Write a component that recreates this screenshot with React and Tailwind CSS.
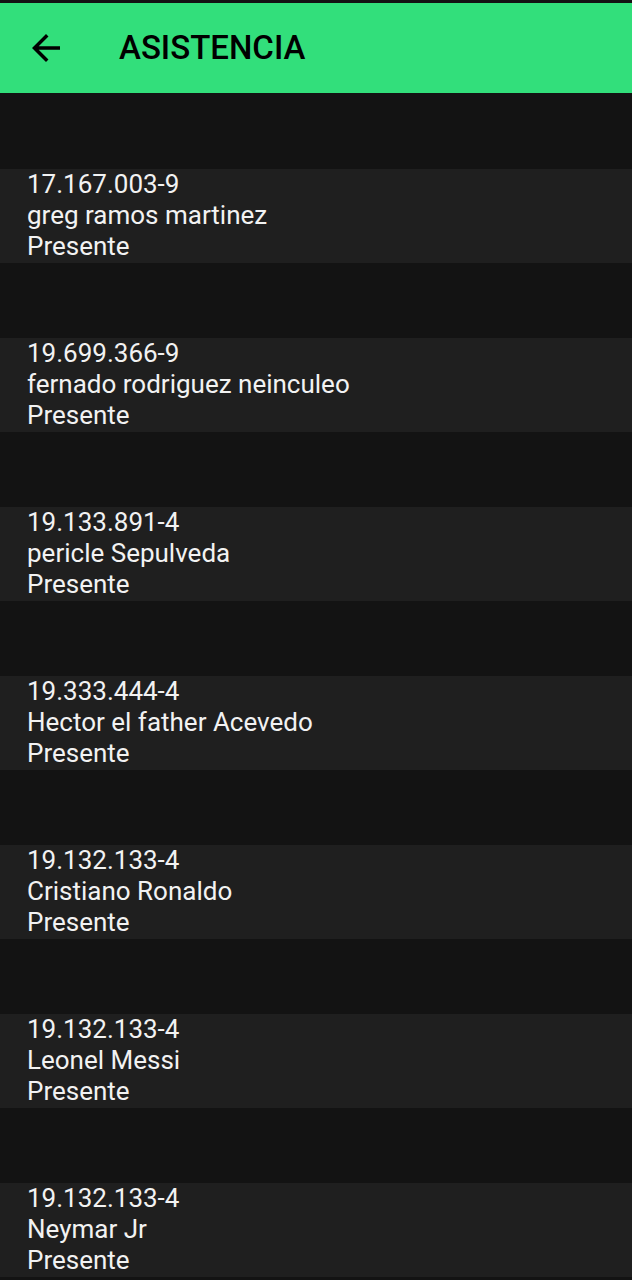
import React from "react";

const alumnos = [
  { rut: "17.167.003-9", nombre: "greg ramos martinez", estado: "Presente" },
  { rut: "19.699.366-9", nombre: "fernado rodriguez neinculeo", estado: "Presente" },
  { rut: "19.133.891-4", nombre: "pericle Sepulveda", estado: "Presente" },
  { rut: "19.333.444-4", nombre: "Hector el father Acevedo", estado: "Presente" },
  { rut: "19.132.133-4", nombre: "Cristiano Ronaldo", estado: "Presente" },
  { rut: "19.132.133-4", nombre: "Leonel Messi", estado: "Presente" },
  { rut: "19.132.133-4", nombre: "Neymar Jr", estado: "Presente" },
];

const ArrowBack = () => (
  <svg width="42" height="42" viewBox="0 0 24 24" fill="#000">
    <path d="M20 11H7.83l5.59-5.59L12 4l-8 8 8 8 1.41-1.41L7.83 13H20v-2z" />
  </svg>
);

export default function App() {
  return (
    <div className="w-[632px] h-[1280px] overflow-hidden bg-[#131313] pt-[3px] font-['Roboto',sans-serif]">
      {/* header */}
      <div className="h-[90px] bg-[#32df7b] flex items-center">
        <div className="ml-[25px] w-[42px] h-[42px]">
          <ArrowBack />
        </div>
        <h1 className="ml-[52px] text-[33px] font-medium text-black">ASISTENCIA</h1>
      </div>

      {/* lista */}
      <div className="flex flex-col pt-px gap-[75px] mt-[75px]">
        {alumnos.map((a, i) => (
          <div key={i} className="h-[94px] bg-[#1f1f1f] pl-[27px] text-[26px] leading-[31px] text-[#f2f2f2]">
            <div>{a.rut}</div>
            <div>{a.nombre}</div>
            <div>{a.estado}</div>
          </div>
        ))}
      </div>
    </div>
  );
}
